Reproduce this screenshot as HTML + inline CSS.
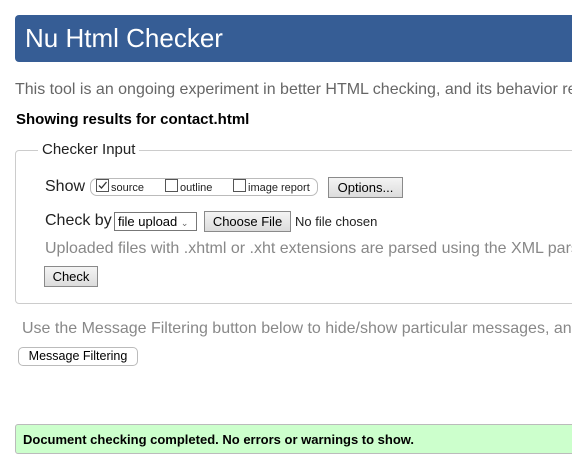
<!DOCTYPE html>
<html><head><style>
body{margin:0;width:572px;height:461px;overflow:hidden;background:#fff;font-family:"Liberation Sans",Arial,sans-serif}
#w{position:relative;width:572px;height:461px;overflow:hidden}
.a{position:absolute;white-space:nowrap}
.btn{position:absolute;box-sizing:border-box;background:linear-gradient(#f4f4f4,#dcdcdc);border:1px solid #8a8a8a;font-size:13px;text-align:center;color:#000}
.cb{display:inline-block;width:11px;height:11px;border:1px solid #555;vertical-align:-1px;margin-right:2px;position:relative;background:#fff}
</style></head><body><div id="w">
<div class="a" style="left:15px;top:15px;width:570px;height:47px;background:#365d95;border-radius:4px"></div>
<div class="a" style="left:25px;top:23px;font-size:26px;color:#fff">Nu Html Checker</div>
<div class="a" style="left:15px;top:81px;font-size:16px;color:#666">This tool is an ongoing experiment in better HTML checking, and its behavior remains subject to change</div>
<div class="a" style="left:16px;top:111px;font-size:15px;font-weight:bold;color:#000">Showing results for contact.html</div>
<div class="a" style="left:15px;top:150px;width:570px;height:154px;border:1px solid #ccc;border-radius:4px;box-sizing:border-box"></div>
<div class="a" style="left:38px;top:141px;padding:0 4px;background:#fff;font-size:15px;color:#222">Checker Input</div>
<div class="a" style="left:45px;top:178px;font-size:16px;color:#222">Show</div>
<div class="a" style="left:90px;top:178px;width:228px;height:18px;border:1px solid #bbb;border-radius:7px;box-sizing:border-box"></div>
<div class="a" style="left:96px;top:179px;font-size:11px;color:#222"><span class="cb"><svg width="11" height="11" style="position:absolute;left:0;top:0"><path d="M2 5.5 L4.5 8 L9.5 2" fill="none" stroke="#333" stroke-width="1.3"/></svg></span>source</div>
<div class="a" style="left:165px;top:179px;font-size:11px;color:#222"><span class="cb"></span>outline</div>
<div class="a" style="left:233px;top:179px;font-size:11px;color:#222"><span class="cb"></span>image report</div>
<div class="btn" style="left:328px;top:177px;width:75px;height:21px;line-height:19px">Options...</div>
<div class="a" style="left:45px;top:212px;font-size:16px;color:#222">Check by</div>
<div class="a" style="left:114px;top:212px;width:83px;height:19px;border:1px solid #777;box-sizing:border-box;font-size:13px;line-height:17px;padding-left:3px">file upload <span style="font-size:9px;color:#666">&#8964;</span></div>
<div class="btn" style="left:204px;top:211px;width:87px;height:21px;line-height:19px">Choose File</div>
<div class="a" style="left:295px;top:214px;font-size:13px;color:#222">No file chosen</div>
<div class="a" style="left:45px;top:240px;font-size:16px;color:#888">Uploaded files with .xhtml or .xht extensions are parsed using the XML parser.</div>
<div class="btn" style="left:44px;top:266px;width:54px;height:21px;line-height:19px">Check</div>
<div class="a" style="left:22px;top:320px;font-size:16px;color:#888">Use the Message Filtering button below to hide/show particular messages, and to see total counts</div>
<div class="a" style="left:18px;top:347px;width:120px;height:19px;border:1px solid #bbb;border-radius:5px;box-sizing:border-box;font-size:12.5px;line-height:17px;text-align:center;background:#fff">Message Filtering</div>
<div class="a" style="left:15px;top:424px;width:570px;height:30px;background:#ccffcc;border:1px solid #bbb;border-radius:3px;box-sizing:border-box"></div>
<div class="a" style="left:23px;top:432px;font-size:13px;font-weight:bold;color:#000">Document checking completed. No errors or warnings to show.</div>
</div></body></html>
